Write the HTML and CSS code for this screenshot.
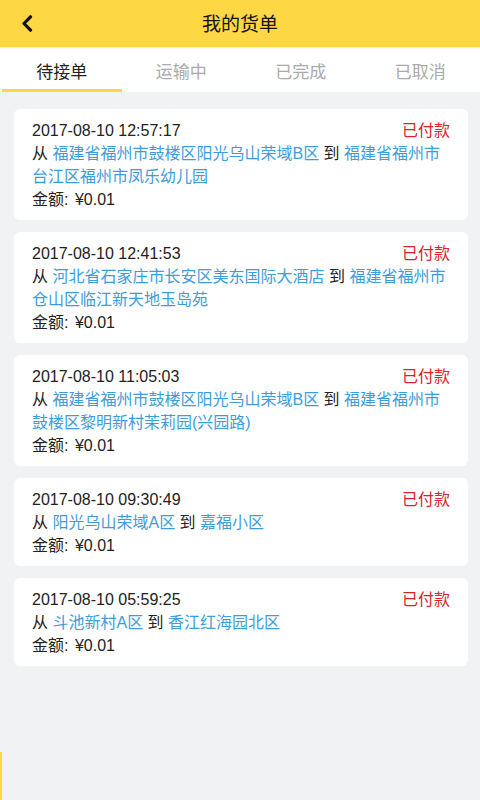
FILE: index.html
```html
<!DOCTYPE html>
<html lang="zh-CN">
<head>
  <meta charset="UTF-8" />
  <meta name="viewport" content="width=device-width, initial-scale=1.0"/>
  <title>我的货单</title>
  <link rel="stylesheet" href="styles.css">
</head>
<body>

  <div class="topbar">
    <span class="back">
      <svg width="12" height="17" viewBox="0 0 12 17"><path d="M9.5 1.8 L3 8.5 L9.5 15.2" fill="none" stroke="#111" stroke-width="3.2" stroke-linecap="round" stroke-linejoin="round"/></svg>
    </span>
    <span class="title">我的货单</span>
  </div>

  <div class="tabs">
    <div class="tab active">待接单</div>
    <div class="tab">运输中</div>
    <div class="tab">已完成</div>
    <div class="tab">已取消</div>
  </div>

  <div class="list">
    <div class="order">
      <div class="head"><span class="time">2017-08-10 12:57:17</span><span class="state">已付款</span></div>
      <div class="route">从 <span class="place">福建省福州市鼓楼区阳光乌山荣域B区</span> 到 <span class="place">福建省福州市台江区福州市凤乐幼儿园</span></div>
      <div class="money">金额: <span class="num">¥0.01</span></div>
    </div>
    <div class="order">
      <div class="head"><span class="time">2017-08-10 12:41:53</span><span class="state">已付款</span></div>
      <div class="route">从 <span class="place">河北省石家庄市长安区美东国际大酒店</span> 到 <span class="place">福建省福州市仓山区临江新天地玉岛苑</span></div>
      <div class="money">金额: <span class="num">¥0.01</span></div>
    </div>
    <div class="order">
      <div class="head"><span class="time">2017-08-10 11:05:03</span><span class="state">已付款</span></div>
      <div class="route">从 <span class="place">福建省福州市鼓楼区阳光乌山荣域B区</span> 到 <span class="place">福建省福州市鼓楼区黎明新村茉莉园(兴园路)</span></div>
      <div class="money">金额: <span class="num">¥0.01</span></div>
    </div>
    <div class="order">
      <div class="head"><span class="time">2017-08-10 09:30:49</span><span class="state">已付款</span></div>
      <div class="route">从 <span class="place">阳光乌山荣域A区</span> 到 <span class="place">嘉福小区</span></div>
      <div class="money">金额: <span class="num">¥0.01</span></div>
    </div>
    <div class="order">
      <div class="head"><span class="time">2017-08-10 05:59:25</span><span class="state">已付款</span></div>
      <div class="route">从 <span class="place">斗池新村A区</span> 到 <span class="place">香江红海园北区</span></div>
      <div class="money">金额: <span class="num">¥0.01</span></div>
    </div>
  </div>

  <div class="edge"></div>
</body>
</html>
```

FILE: styles.css
```css
body {
  font-family: "Liberation Sans", "Noto Sans CJK SC", sans-serif;
  background: #f1f2f4;
  margin: 0;
  color: #222;
  min-height: 800px;
}
.topbar {
  height: 47px;
  background: #fdd844;
  display: flex;
  align-items: center;
  justify-content: center;
  position: relative;
  box-shadow: 0 1px 2px rgba(0,0,0,0.08);
  z-index: 1;
}
.back {
  position: absolute;
  left: 21px;
  top: 15px;
  line-height: 0;
}
.title {
  font-size: 19px;
  color: #111;
  padding-bottom: 3px;
}
.tabs {
  display: flex;
  background: #fff;
  height: 45px;
}
.tab {
  flex: 1;
  display: flex;
  align-items: center;
  justify-content: center;
  font-size: 17px;
  color: #aaa;
  box-sizing: border-box;
  padding-top: 1px;
}
.tab.active {
  color: #222;
  border-bottom: 3px solid #fdd844;
  margin: 0 0 0 2px;
  padding-top: 4px;
}
.list {
  padding: 17px 12px 0 14px;
  display: flex;
  flex-direction: column;
  gap: 12px;
}
.order {
  background: #fff;
  border-radius: 6px;
  padding: 10px 18px 9px 18px;
  font-size: 16px;
  line-height: 23px;
}
.head {
  display: flex;
  justify-content: space-between;
}
.time {
  font-size: 16px;
}
.num {
  font-size: 16px;
  margin-left: 2px;
}
.state {
  color: #d9232a;
}
.place {
  color: #3d9ddb;
}
.edge {
  position: fixed;
  left: 0;
  bottom: 0;
  width: 2px;
  height: 48px;
  background: #fdd844;
}
```
